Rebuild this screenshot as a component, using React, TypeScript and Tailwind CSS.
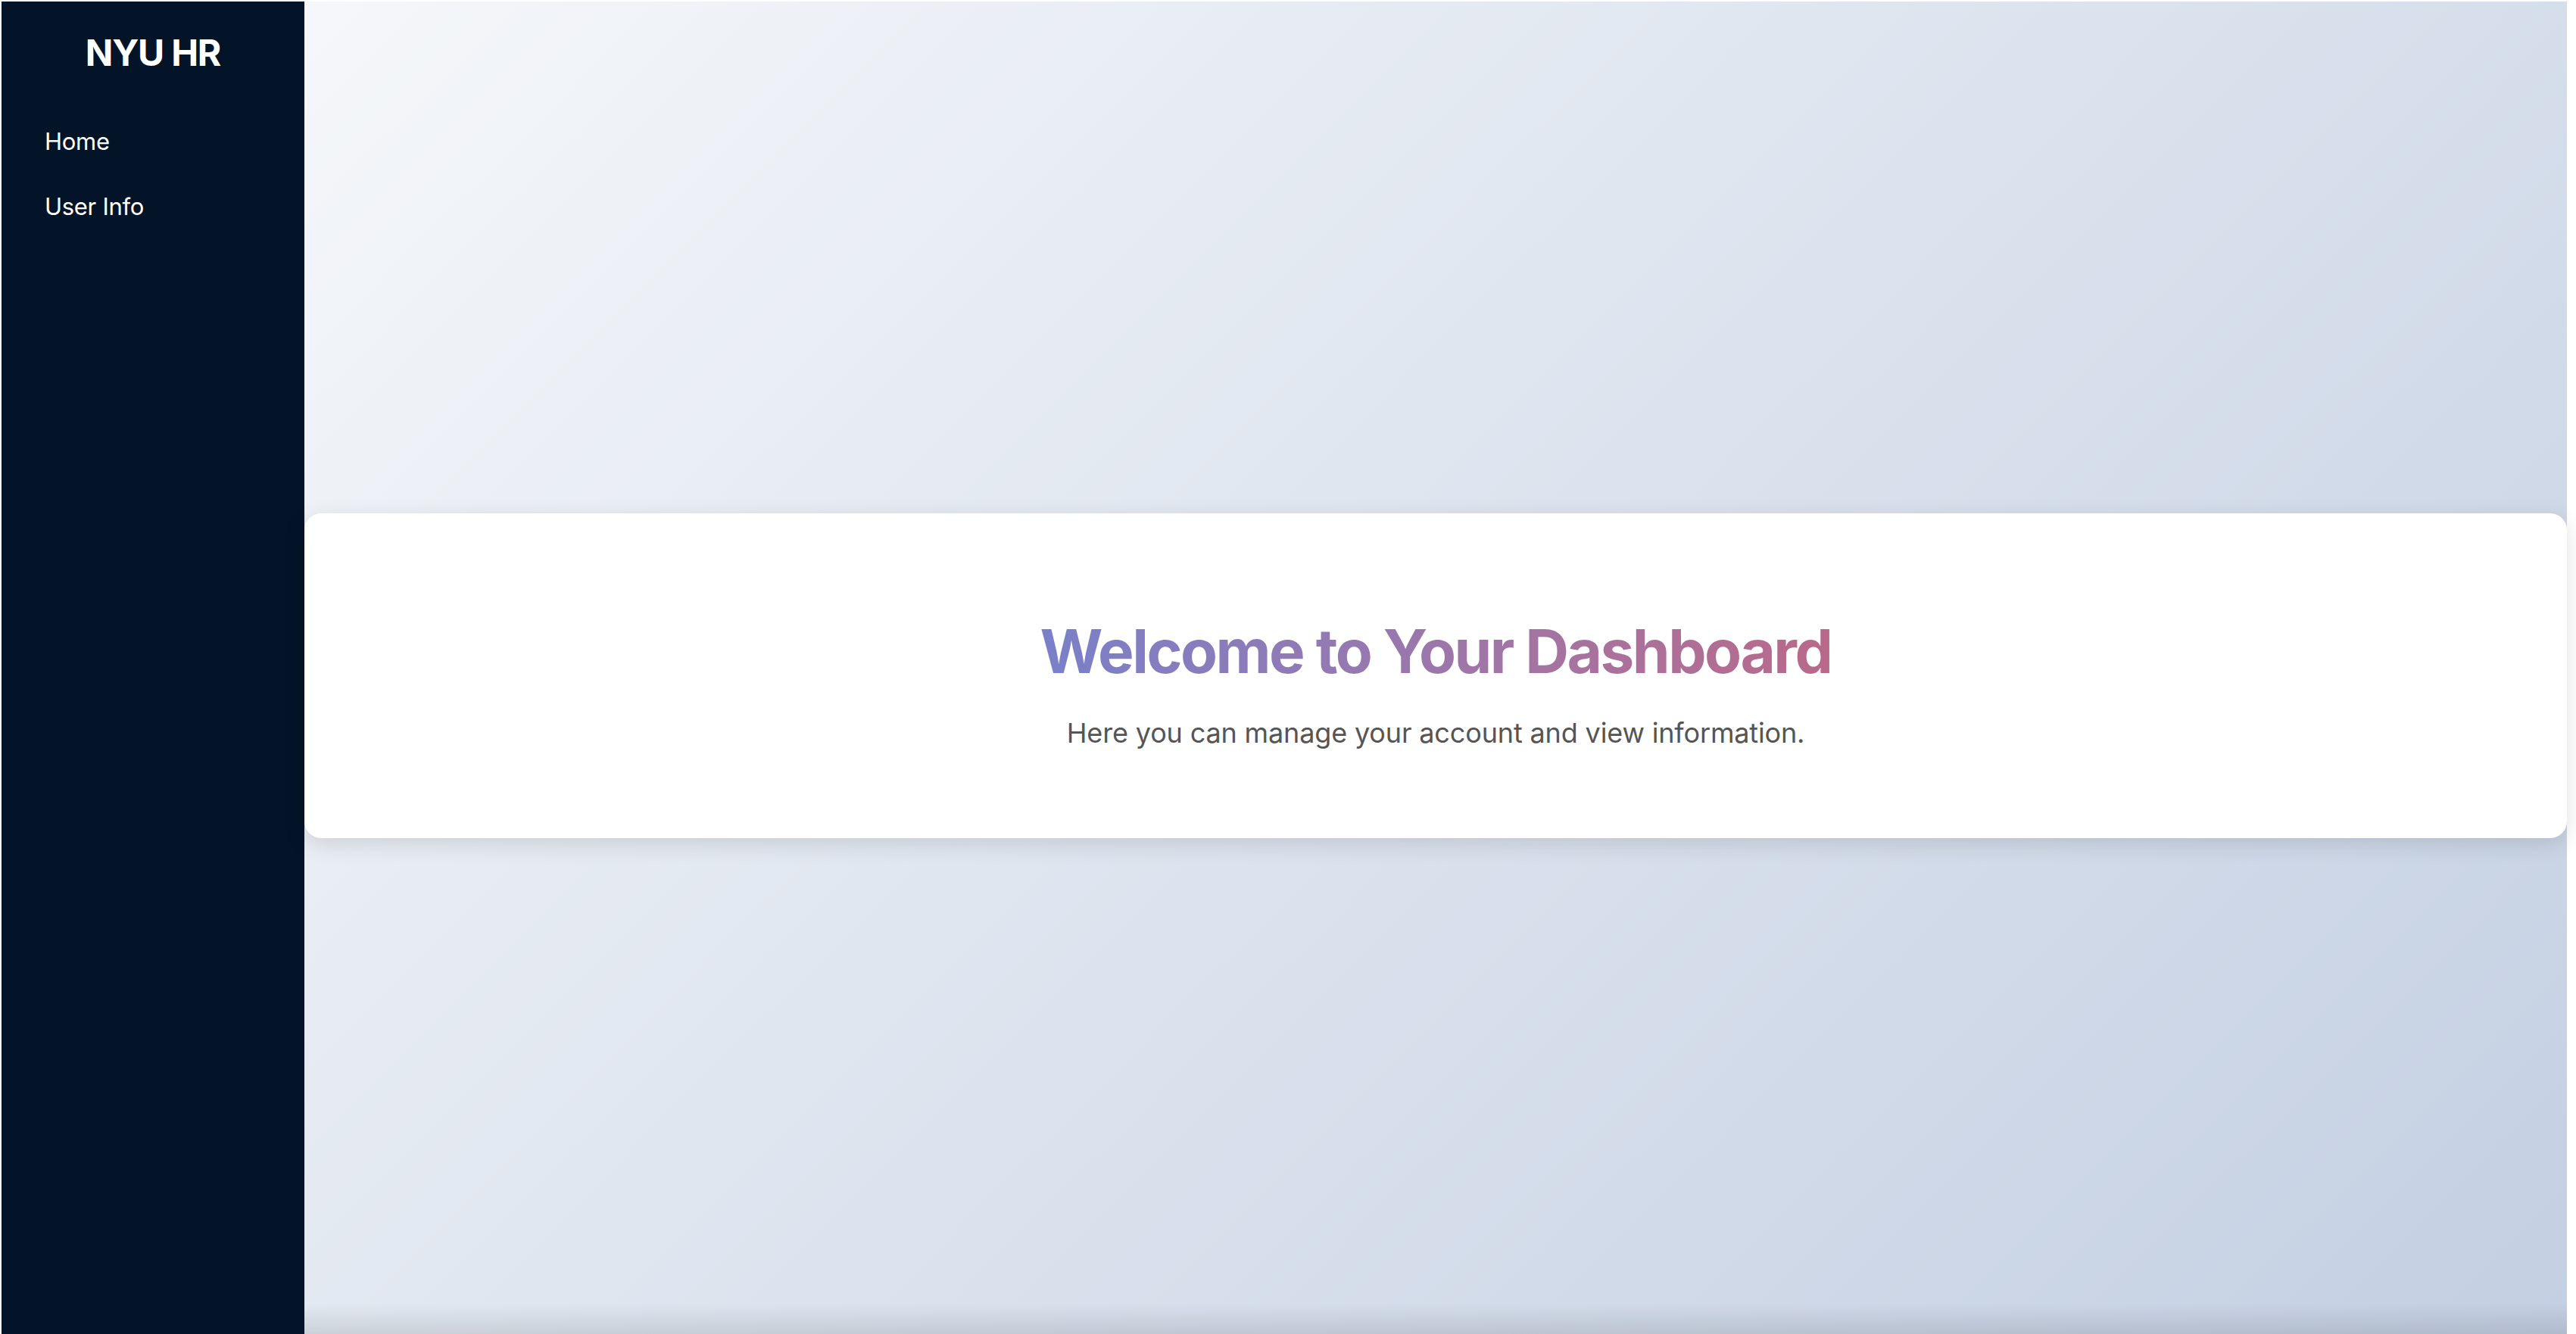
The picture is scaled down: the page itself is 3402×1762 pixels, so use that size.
import React from "react";

const links = ["Home", "User Info"];

function Sidebar() {
  return (
    <aside className="flex w-[400px] shrink-0 flex-col bg-[#031428] pt-[36px]">
      <h2 className="text-center text-[48px] font-bold leading-[64px] tracking-[-1.2px] text-white">
        NYU HR
      </h2>
      <nav className="mt-[42px] flex flex-col">
        {links.map((label) => (
          <a
            key={label}
            href="#"
            className="pl-[57px] py-[19px] text-[31px] leading-[48px] tracking-[-0.3px] text-white"
          >
            {label}
          </a>
        ))}
      </nav>
    </aside>
  );
}

export default function App() {
  return (
    <div
      className="flex h-[1762px] w-full overflow-hidden bg-white pt-[2px] pl-[2px] pr-[12px]"
      style={{ fontFamily: "Inter, 'Noto Sans', sans-serif" }}
    >
      <Sidebar />
      <main className="relative flex flex-1 items-center bg-[linear-gradient(135deg,#f5f7fa_0%,#c3cfe2_100%)] pt-[20px]">
        <div className="relative z-10 w-full rounded-[22px] bg-white pt-[134px] pb-[112px] text-center shadow-[0_8px_30px_rgba(0,0,0,0.12)]">
          <h1 className="inline-block bg-gradient-to-r from-[#7980c9] to-[#b9698a] bg-clip-text text-[80px] font-bold leading-[96px] tracking-[-2.5px] text-transparent">
            Welcome to Your Dashboard
          </h1>
          <p className="mt-[33px] text-[36px] leading-[54px] tracking-[-0.15px] text-[#555555]">
            Here you can manage your account and view information.
          </p>
        </div>
        <div className="pointer-events-none absolute inset-x-0 bottom-0 h-[40px] bg-gradient-to-b from-transparent to-black/10" />
      </main>
    </div>
  );
}
